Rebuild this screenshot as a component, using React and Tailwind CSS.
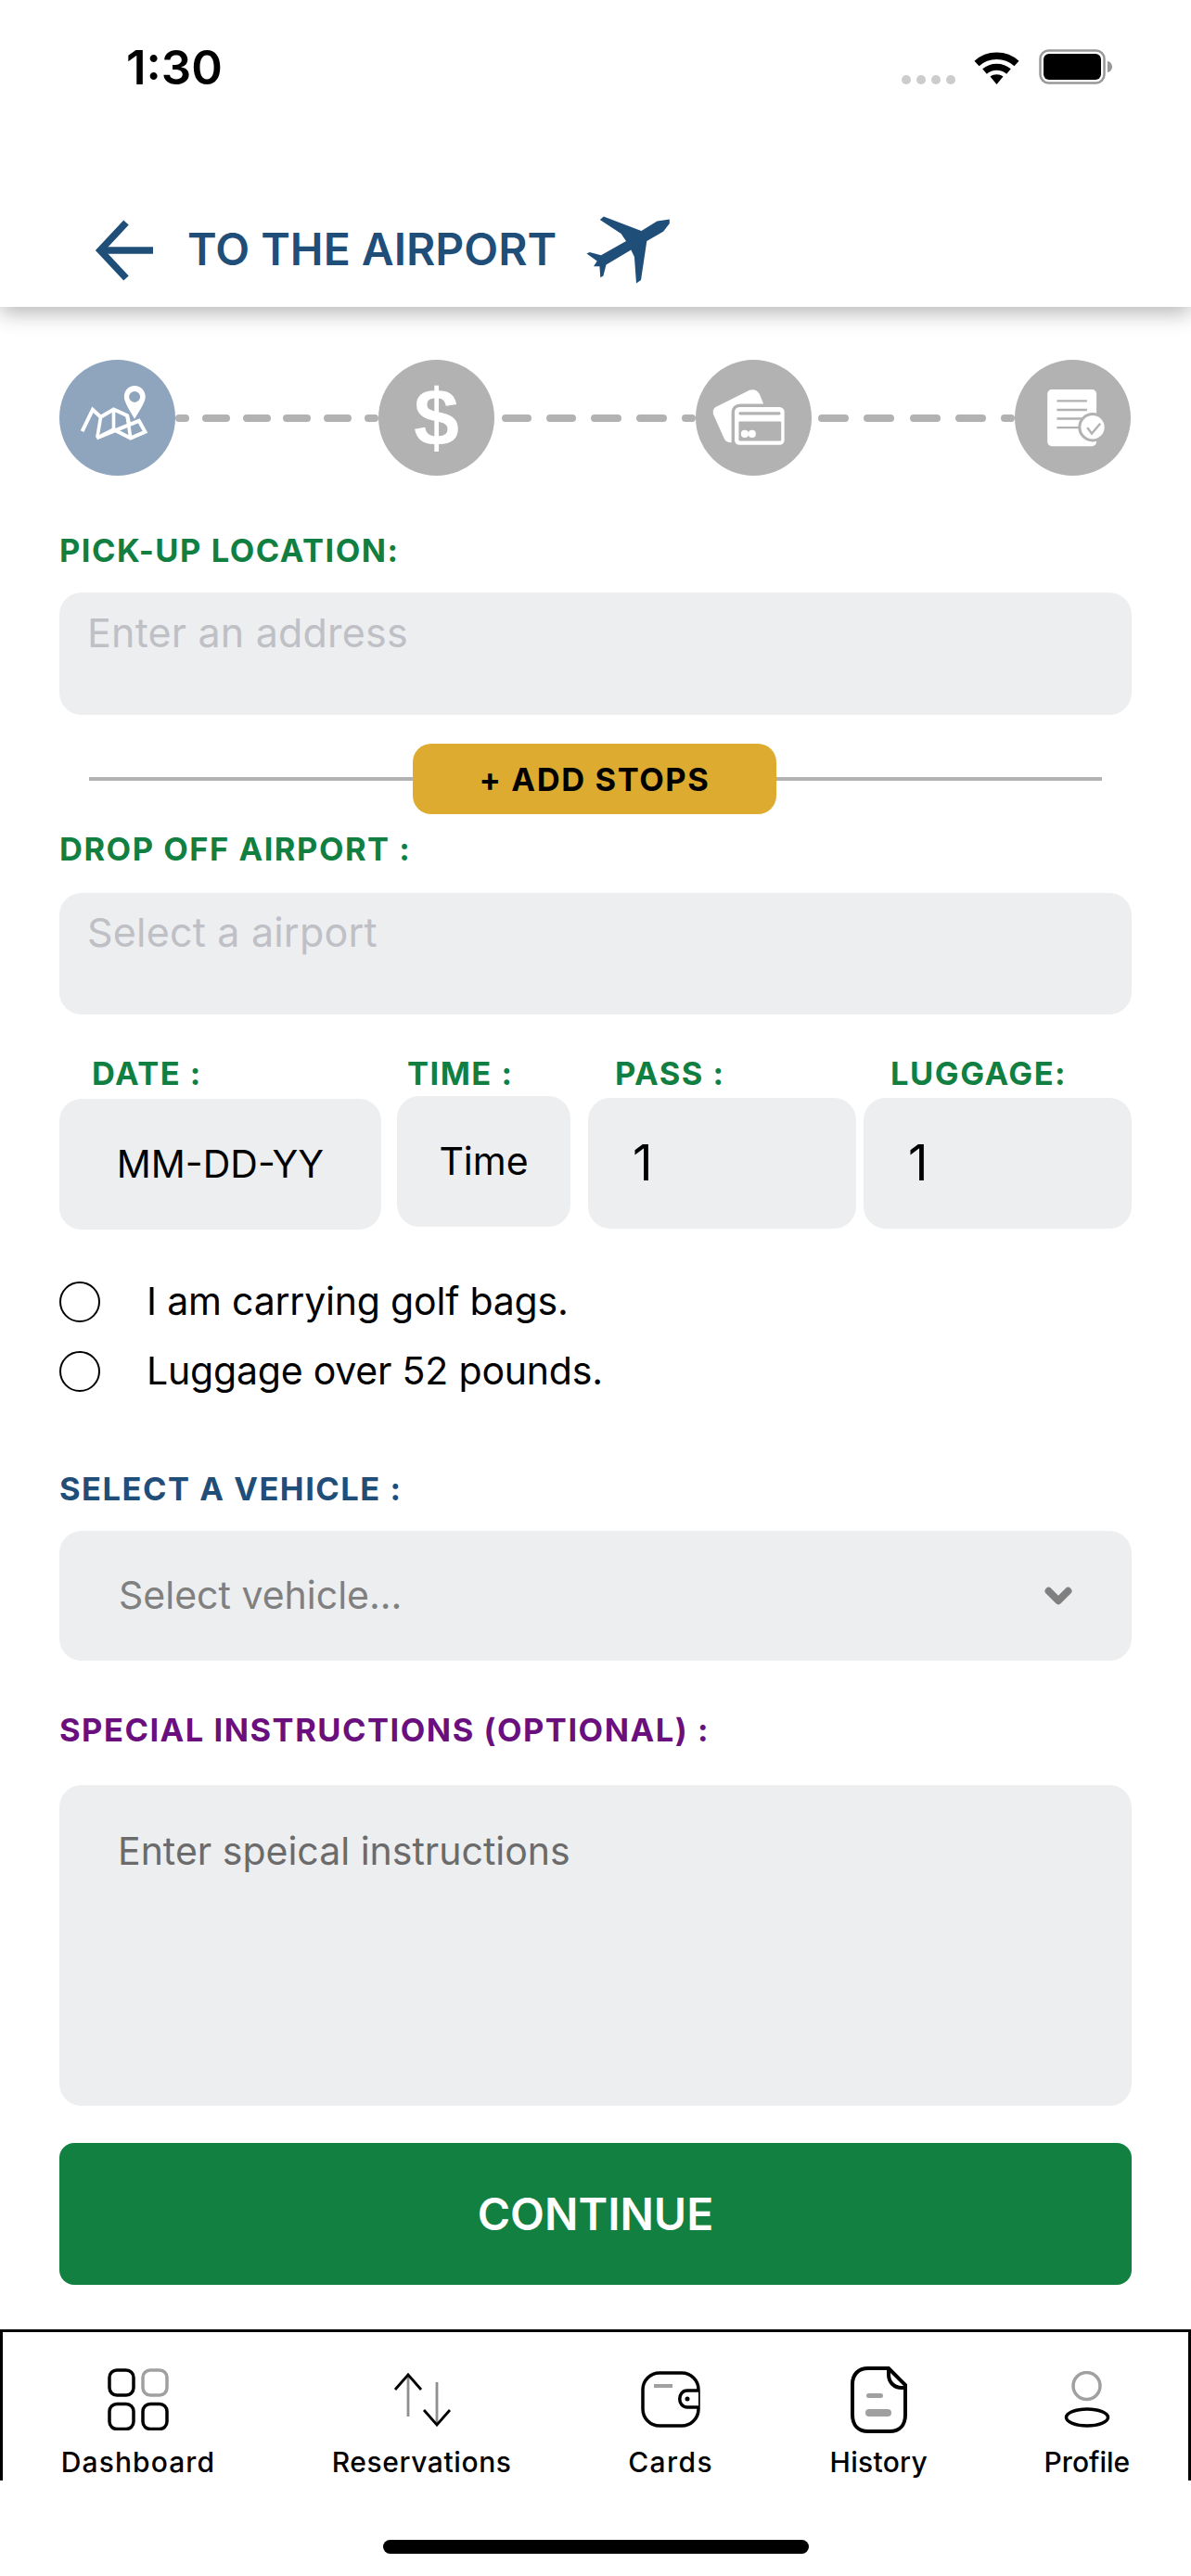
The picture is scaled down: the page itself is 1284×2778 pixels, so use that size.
import { ChevronDown } from "lucide-react";

function WifiIcon() {
  return (
    <svg width="51" height="37" viewBox="0 0 51 37" fill="none">
      <path d="M4 14.5C16 3.5 35 3.5 47 14.5" stroke="#000" strokeWidth="7.5" />
      <path d="M12.5 23C20 16.5 31 16.5 38.5 23" stroke="#000" strokeWidth="7" />
      <path d="M18.5 28.5C22.5 25.5 28.5 25.5 32.5 28.5L25.5 37Z" fill="#000" />
    </svg>
  );
}

function BatteryIcon() {
  return (
    <svg width="80" height="38" viewBox="0 0 80 38" fill="none">
      <rect x="1.5" y="1.5" width="69" height="35" rx="9" stroke="#999" strokeWidth="2.5" />
      <rect x="5" y="5" width="62" height="28" rx="6" fill="#000" />
      <path d="M74 13C77 13.5 79 16 79 19C79 22 77 24.5 74 25Z" fill="#999" />
    </svg>
  );
}

function BackArrow() {
  return (
    <svg width="66" height="66" viewBox="0 0 66 66" fill="none">
      <path d="M36 3L8 33L36 63" stroke="#1f4e79" strokeWidth="7.5" />
      <path d="M10 33H65" stroke="#1f4e79" strokeWidth="7.5" />
    </svg>
  );
}

function PlaneIcon() {
  return (
    <svg width="92" height="75" viewBox="630 232 92 75">
      <path
        fill="#1f4e79"
        d="M720.8 236.6L707.4 238.4L690.4 249L649.8 233.6L645.8 237L668.6 252L674 260L647 275.3L634.6 272L631.5 273.6L642.7 281.5L639 287.3L645.4 287.3L646.3 299.3L649.4 297.6L652.5 285.6L679.3 269.5L682.9 277L685 305.5L690 302L696.3 260L714 249.7L720.8 241Z"
      />
    </svg>
  );
}

function MapIcon() {
  return (
    <svg width="125" height="125" viewBox="72 84 376 376" fill="none">
      <path
        d="M146 316L180 246L206 270L248 245L292 265L300 300M330 282L350 318L303 338L248 310L193 338Z"
        stroke="#fff"
        strokeWidth="12"
      />
      <path d="M206 270L195 336M248 245L248 312M292 265L303 338" stroke="#fff" strokeWidth="11" />
      <path
        fillRule="evenodd"
        d="M316 168C296 168 282 184 282 204C282 222 304 254 316 276C328 254 351 222 351 204C351 184 336 168 316 168ZM316 186A18 18 0 1 1 316 222A18 18 0 1 1 316 186Z"
        fill="#fff"
      />
    </svg>
  );
}

function CardsIcon() {
  return (
    <svg width="125" height="125" viewBox="142 89 366 366" fill="none">
      <path
        d="M205 238L312 185C325 180 338 186 344 198L356 228H285C266 228 255 238 255 258V350C244 350 236 347 232 338L198 262C195 252 197 243 205 238Z"
        fill="#fff"
      />
      <rect x="265" y="238" width="157" height="120" rx="15" fill="#fff" />
      <rect x="278" y="254" width="132" height="9" rx="4" fill="#b2b2b2" />
      <rect x="278" y="284" width="134" height="61" rx="3" fill="#b2b2b2" />
      <circle cx="297" cy="323" r="12" fill="#fff" />
      <circle cx="320" cy="323" r="12" fill="#fff" />
    </svg>
  );
}

function DocIcon() {
  return (
    <svg width="125" height="125" viewBox="1140 89 366 366" fill="none">
      <rect x="1243" y="183" width="155" height="179" rx="14" fill="#fff" />
      <path d="M1273 219H1368M1273 247H1368M1273 275H1355M1273 303H1350" stroke="#b2b2b2" strokeWidth="7" />
      <circle cx="1386" cy="302" r="46" fill="#b2b2b2" />
      <circle cx="1386" cy="302" r="37" fill="#fff" />
      <path d="M1369 303L1383 322L1410 290" stroke="#b2b2b2" strokeWidth="7" />
    </svg>
  );
}

function DashboardIcon() {
  return (
    <svg width="66" height="67" viewBox="0 0 66 67" fill="none" strokeWidth="3.5">
      <rect x="2" y="2" width="26" height="27" rx="8" stroke="#000" />
      <rect x="38" y="2" width="26" height="27" rx="8" stroke="#a0a0a0" />
      <rect x="2" y="38.5" width="26" height="27" rx="8" stroke="#000" />
      <rect x="38" y="38.5" width="26" height="27" rx="8" stroke="#000" />
    </svg>
  );
}

function ReservationsIcon() {
  return (
    <svg width="64" height="59" viewBox="0 0 64 59" fill="none" strokeWidth="2.8">
      <path d="M17 4V48M48 11V55" stroke="#8f8f8f" />
      <path d="M3 19L17 3L31 19M34 41L48 57L62 41" stroke="#000" />
    </svg>
  );
}

function WalletIcon() {
  return (
    <svg width="64" height="61" viewBox="0 0 64 61" fill="none">
      <rect x="2" y="2" width="60" height="57" rx="18" stroke="#000" strokeWidth="3.5" />
      <path d="M14 16H34" stroke="#a0a0a0" strokeWidth="4" />
      <path d="M62 21H50C39 21 39 39 50 39H62" fill="#fff" stroke="#000" strokeWidth="3.5" />
      <circle cx="50" cy="30" r="2.5" fill="#000" />
    </svg>
  );
}

function HistoryIcon() {
  return (
    <svg width="62" height="73" viewBox="0 0 62 73" fill="none">
      <path
        d="M42 3H20C9 3 3 10 3 20V53C3 64 9 71 20 71H43C54 71 60 64 60 53V21Z"
        stroke="#000"
        strokeWidth="4"
      />
      <path d="M42 3V10C42 18 48 24 56 24H60" stroke="#000" strokeWidth="4" />
      <rect x="18" y="30" width="18" height="5" rx="2.5" fill="#a0a0a0" />
      <rect x="17" y="47" width="28" height="8" rx="4" fill="#a0a0a0" />
    </svg>
  );
}

function ProfileIcon() {
  return (
    <svg width="50" height="61" viewBox="0 0 50 61" fill="none" strokeWidth="3.5">
      <circle cx="24.5" cy="16" r="14.5" stroke="#a0a0a0" />
      <ellipse cx="25" cy="50" rx="22.5" ry="9" stroke="#000" />
    </svg>
  );
}

function Dashes({ items }) {
  return (
    <div className="flex-1 flex items-center justify-between">
      {items.map((w, i) => (
        <span key={i} className="h-[8px] rounded-full bg-[#b2b2b2]" style={{ width: w }} />
      ))}
    </div>
  );
}

function Step({ active, children }) {
  return (
    <div className={`w-[125px] h-[125px] rounded-full flex items-center justify-center shrink-0 overflow-hidden ${active ? "bg-[#8fa5bd]" : "bg-[#b2b2b2]"}`}>
      {children}
    </div>
  );
}

function Field({ className, children }) {
  return <div className={`bg-[#edeef0] rounded-[24px] ${className}`}>{children}</div>;
}

function Radio({ className, children }) {
  return (
    <div className={`flex items-center h-[44px] ${className}`}>
      <span className="w-[44px] h-[44px] rounded-full border-[2.5px] border-black shrink-0" />
      <span className="ml-[50px] text-[41px] text-black tracking-[-0.2px]">{children}</span>
    </div>
  );
}

const navItems = [
  { label: "Dashboard", icon: <DashboardIcon />, track: "tracking-[1.1px]" },
  { label: "Reservations", icon: <ReservationsIcon />, track: "tracking-[0.6px]" },
  { label: "Cards", icon: <WalletIcon />, track: "tracking-[1.4px]" },
  { label: "History", icon: <HistoryIcon />, track: "tracking-[0.3px]" },
  { label: "Profile", icon: <ProfileIcon />, track: "tracking-[0px]" },
];

export default function App() {
  return (
    <div className="w-full h-[2778px] overflow-hidden bg-white flex flex-col font-[Inter]">
      <header className="h-[331px] shrink-0 bg-white shadow-[0_6px_22px_rgba(0,0,0,0.3)] relative">
        <div className="h-[144px] flex items-start justify-between pl-[136px] pr-[84px] pt-[48px]">
          <span className="text-[51px] leading-[50px] font-semibold text-black">1:30</span>
          <div className="flex items-end pt-[5px]">
            <div className="flex gap-[6px] mr-[19px]">
              <span className="w-[10px] h-[10px] rounded-full bg-[#ccc]" />
              <span className="w-[10px] h-[10px] rounded-full bg-[#ccc]" />
              <span className="w-[10px] h-[10px] rounded-full bg-[#ccc]" />
              <span className="w-[10px] h-[10px] rounded-full bg-[#ccc]" />
            </div>
            <WifiIcon />
            <div className="ml-[20px]">
              <BatteryIcon />
            </div>
          </div>
        </div>
        <div className="flex items-center pl-[100px] mt-[91px] h-[70px]">
          <BackArrow />
          <span className="ml-[36px] -mt-[2px] text-[48px] leading-[60px] font-semibold text-[#1f4e79] whitespace-nowrap">TO THE AIRPORT</span>
          <div className="ml-[31px] -mt-[2px]">
            <PlaneIcon />
          </div>
        </div>
      </header>

      <main className="px-[64px] flex flex-col">
        <div className="flex items-center mt-[57px]">
          <Step active><MapIcon /></Step>
          <div className="w-[219px] flex shrink-0"><Dashes items={[15, 30, 30, 30, 30, 15]} /></div>
          <Step><span className="text-[88px] leading-none font-bold text-white font-['Liberation_Sans']">$</span></Step>
          <div className="w-[217px] flex shrink-0 pl-[8px]"><Dashes items={[32, 32, 33, 33, 15]} /></div>
          <Step><CardsIcon /></Step>
          <div className="w-[219px] flex shrink-0 pl-[7px]"><Dashes items={[33, 33, 33, 33, 15]} /></div>
          <Step><DocIcon /></Step>
        </div>

        <label className="mt-[60px] h-[40px] leading-[42px] text-[34.5px] font-bold tracking-[1.5px] text-[#117f41] whitespace-nowrap">PICK-UP LOCATION:</label>
        <Field className="mt-[26px] h-[132px] pl-[30px] pt-[17px] text-[43px] leading-[52px] tracking-[0.2px] text-[#bfc0c6]">Enter an address</Field>

        <div className="flex items-center mt-[31px] pl-[32px] pr-[32px]">
          <div className="w-[349px] h-[4px] bg-[#b2b2b2]" />
          <button className="w-[392px] h-[76px] pt-[2px] rounded-[20px] bg-[#ddab30] text-[34.5px] font-bold text-black tracking-[1.6px]">+ ADD STOPS</button>
          <div className="flex-1 h-[4px] bg-[#b2b2b2]" />
        </div>

        <label className="mt-[17px] h-[40px] leading-[42px] text-[34.5px] font-bold tracking-[1.5px] text-[#117f41] whitespace-nowrap">DROP OFF AIRPORT :</label>
        <Field className="mt-[28px] h-[131px] pl-[30px] pt-[16px] text-[43px] leading-[52px] tracking-[0.2px] text-[#bfc0c6]">Select a airport</Field>

        <div className="flex mt-[43px] text-[34.5px] font-bold tracking-[1.5px] text-[#117f41]">
          <div className="w-[347px] shrink-0">
            <div className="h-[40px] leading-[42px] pl-[35px]">DATE :</div>
            <Field className="mt-[8px] h-[141px] flex items-center justify-center text-[41px] font-normal tracking-normal text-black">MM-DD-YY</Field>
          </div>
          <div className="w-[187px] shrink-0 ml-[17px]">
            <div className="h-[40px] leading-[42px] pl-[11px]">TIME :</div>
            <Field className="mt-[5px] h-[141px] flex items-center justify-center text-[41px] font-normal tracking-normal text-black">Time</Field>
          </div>
          <div className="w-[289px] shrink-0 ml-[19px]">
            <div className="h-[40px] leading-[42px] pl-[29px]">PASS :</div>
            <Field className="mt-[7px] h-[141px] flex items-center pl-[48px] text-[53px] font-normal tracking-normal text-black">1</Field>
          </div>
          <div className="w-[289px] shrink-0 ml-[8px]">
            <div className="h-[40px] leading-[42px] pl-[29px] whitespace-nowrap">LUGGAGE:</div>
            <Field className="mt-[7px] h-[141px] flex items-center pl-[48px] text-[53px] font-normal tracking-normal text-black">1</Field>
          </div>
        </div>

        <Radio className="mt-[56px]">I am carrying golf bags.</Radio>
        <Radio className="mt-[31px]">Luggage over 52 pounds.</Radio>

        <label className="mt-[84px] h-[40px] leading-[42px] text-[34.5px] font-bold tracking-[1.5px] text-[#1f4e79] whitespace-nowrap">SELECT A VEHICLE :</label>
        <Field className="mt-[26px] h-[140px] flex items-center justify-between pl-[64px] pr-[58px] text-[41px] text-[#808080]">
          <span>Select vehicle...</span>
          <ChevronDown size={42} strokeWidth={4.5} color="#808080" />
        </Field>

        <label className="mt-[54px] h-[40px] leading-[42px] text-[34.5px] font-bold tracking-[1.5px] text-[#6a0f7e] whitespace-nowrap">SPECIAL INSTRUCTIONS (OPTIONAL) :</label>
        <Field className="mt-[40px] h-[346px] pl-[63px] pt-[46px] text-[41px] leading-[50px] text-[#6b6b6b]">Enter speical instructions</Field>

        <button className="mt-[40px] h-[153px] rounded-[16px] bg-[#118040] text-[48px] font-semibold text-white">CONTINUE</button>
      </main>

      <nav className="mt-[48px] h-[163px] shrink-0 border-t-[3px] border-x-[3px] border-black overflow-hidden flex justify-around pt-[33px]">
        {navItems.map((item) => (
          <div key={item.label} className="flex flex-col items-center">
            <div className="h-[80px] flex items-center justify-center">{item.icon}</div>
            <span className={`mt-[8px] h-[40px] leading-[40px] text-[30px] font-medium text-black whitespace-nowrap ${item.track}`}>{item.label}</span>
          </div>
        ))}
      </nav>

      <div className="mt-[64px] mx-auto w-[459px] h-[15px] rounded-full bg-black shrink-0" />
    </div>
  );
}
